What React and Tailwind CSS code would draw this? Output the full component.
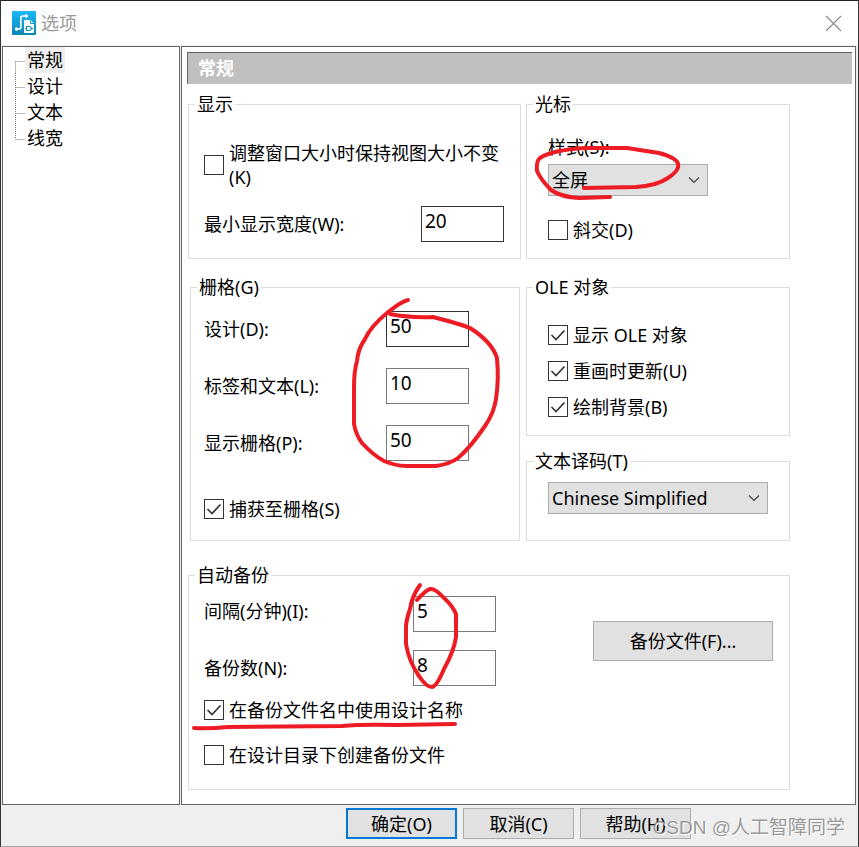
import React from "react";

const TREE_ITEMS = ["常规", "设计", "文本", "线宽"];

function AppIcon() {
  return (
    <svg width="24" height="24" viewBox="0 0 24 24" aria-hidden="true">
      <defs>
        <linearGradient id="iconFill" x1="0" y1="0" x2="0" y2="1">
          <stop offset="0" stopColor="#1cb8f4" />
          <stop offset="1" stopColor="#0a86b4" />
        </linearGradient>
      </defs>
      <rect width="24" height="24" rx="1" fill="url(#iconFill)" />
      <path d="M4.500 18H7q1.800 0 1.800-1.800V6.800Q8.800 5 10.600 5H14" fill="none" stroke="#fff" strokeWidth="1.600" />
      <circle cx="4.500" cy="18" r="1.700" fill="#fff" />
      <circle cx="14.300" cy="5" r="1.700" fill="#fff" />
      <path d="M12 10q0-1 1-1h5.500l3.500 3.500V21q0 1-1 1h-8q-1 0-1-1z" fill="#fff" />
      <path d="M18.500 9.500v3H22" fill="none" stroke="#1595c5" strokeWidth="1" />
      <path d="M14.500 15.500h2.500q2 0 2.500 2-.5 2-2.500 2h-2.500zM13 17.500h1.500M19.500 17.500h1.500" fill="none" stroke="#0d8cbc" strokeWidth="1.100" />
    </svg>
  );
}

function Group({ title, className = "", bodyClass = "", children }) {
  return (
    <fieldset className={"min-w-0 border border-[#dcdcdc] " + className}>
      <legend className="ml-1.5 px-0.5">{title}</legend>
      <div className={bodyClass}>{children}</div>
    </fieldset>
  );
}

function Check({ label, checked = false }) {
  return (
    <label className="flex items-center gap-[5px]">
      <span className="grid size-5 shrink-0">
        <input
          type="checkbox"
          defaultChecked={checked}
          className="peer col-start-1 row-start-1 size-5 appearance-none border border-[#333] bg-white"
        />
        <svg
          viewBox="0 0 20 20"
          className="pointer-events-none invisible col-start-1 row-start-1 size-5 peer-checked:visible"
          aria-hidden="true"
        >
          <path d="M3.500 10l4.500 4.500 8.500-9" fill="none" stroke="#333" strokeWidth="1.700" />
        </svg>
      </span>
      <span>{label}</span>
    </label>
  );
}

function NumberBox({ id, value, tone = "border-[#7a7a7a]" }) {
  return (
    <input
      id={id}
      type="text"
      defaultValue={value}
      className={"h-9 w-[83px] border bg-white px-[3px] pb-1.5 text-[19px] outline-none " + tone}
    />
  );
}

function Select({ id, value, label, className }) {
  return (
    <div className={"grid h-8 max-w-full " + className}>
      <select
        id={id}
        aria-label={label}
        defaultValue={value}
        className="col-start-1 row-start-1 w-full appearance-none border border-[#adadad] bg-[#e1e1e1] pl-[3px] pr-8"
      >
        <option>{value}</option>
      </select>
      <svg
        viewBox="0 0 12 8"
        className="pointer-events-none col-start-1 row-start-1 mr-2 h-2 w-3 self-center justify-self-end"
        aria-hidden="true"
      >
        <path d="M1 1.500l5 5 5-5" fill="none" stroke="#444" strokeWidth="1.200" />
      </svg>
    </div>
  );
}

function GridRow({ id, label, value, tone }) {
  return (
    <div className="flex items-center">
      <label htmlFor={id} className="w-[182px]">{label}</label>
      <NumberBox id={id} value={value} tone={tone} />
    </div>
  );
}

function PenMarks() {
  return (
    <svg
      width="859"
      height="847"
      viewBox="0 0 859 847"
      className="pointer-events-none absolute -left-px -top-px"
      fill="none"
      stroke="#ed1c24"
      strokeWidth="4"
      strokeLinecap="round"
      strokeLinejoin="round"
      aria-hidden="true"
    >
      <path d="M584 188L636 187Q656 186 668 178Q680 170 678 164Q677 158 659 153L627 148L585 148Q552 150 540 158Q536 161 537 171Q541 180 551 190Q561 197 579 198L610 197" />
      <path d="M408 300Q402 301 387 313Q371 326 365 339Q358 349 357 361Q354 371 354 388L354 424Q356 435 362 443Q373 455 384 461Q396 466 406 466L436 466Q450 464 458 458Q470 448 485 426Q494 413 496 399Q499 380 497 358Q492 342 470 328Q460 324 433 317Q410 318 390 314" />
      <path d="M420 585Q412 596 410 609Q406 621 406 627L406 644Q409 662 419 676Q426 687 432 687Q437 686 444 669Q454 651 456 637V614Q452 605 444 598Q435 588 430 589Q426 590 417 600" />
      <path d="M194 728Q208 729 228 727L342 726Q362 724 397 725L455 724" />
    </svg>
  );
}

export default function App() {
  return (
    <div className="relative flex min-h-screen flex-col border border-t-[#222] border-x-[#333] border-b-[#a3a3ab] bg-[#efefef] font-['Noto_Sans','Noto_Sans_CJK_SC',sans-serif] text-[18px] leading-6 text-black">
      <header className="flex h-11 items-center bg-white pl-[11px] pr-4">
        <AppIcon />
        <h1 className="ml-[5px] text-[#999]">选项</h1>
        <button type="button" aria-label="关闭" className="ml-auto">
          <svg width="17" height="17" viewBox="0 0 17 17" aria-hidden="true">
            <path d="M1 1l15 15M16 1L1 16" stroke="#888" strokeWidth="1.100" />
          </svg>
        </button>
      </header>

      <div className="flex flex-1 gap-px pl-px pr-0.5 pt-px">
        <nav className="w-[178px] shrink-0 border border-[#646464] bg-white pl-3" aria-label="分类">
          <ul>
            {TREE_ITEMS.map((item, i) => (
              <li key={item} className="flex h-[26px]">
                <svg width="10" height="26" viewBox="0 0 10 26" className="shrink-0" aria-hidden="true">
                  <path
                    d={i === 0 ? "M.5 14.500V26M.5 14.500H10" : i === TREE_ITEMS.length - 1 ? "M.5 0V14M.5 14.500H10" : "M.5 0V26M.5 14.500H10"}
                    fill="none"
                    stroke="#777"
                    strokeDasharray="1 1"
                  />
                </svg>
                <a
                  href="#general"
                  className={i === 0 ? "bg-[#efefef] px-0.5 leading-[26px]" : "px-0.5 leading-[26px]"}
                >
                  {item}
                </a>
              </li>
            ))}
          </ul>
        </nav>

        <main className="min-w-0 flex-1 border border-[#646464] bg-white pb-3.5 pl-[5px] pt-[5px]">
          <h2 className="mr-[3px] h-8 border-l border-t border-[#646464] bg-[#c0c0c0] pl-2.5 font-bold leading-[30px] text-white">
            常规
          </h2>

          <div className="mr-[65px] ml-px mt-2">
            <div className="grid grid-cols-[333fr_264fr] gap-x-[5px] gap-y-4">
              <Group title="显示" bodyClass="pb-4 pl-[15px] pr-4 pt-[25px]">
                <Check label="调整窗口大小时保持视图大小不变 (K)" />
                <div className="mt-[17px] flex items-center justify-between">
                  <label htmlFor="minWidth">最小显示宽度(W):</label>
                  <NumberBox id="minWidth" value="20" tone="border-[#333]" />
                </div>
              </Group>

              <Group title="光标" bodyClass="px-[21px] pt-[19px]">
                <label htmlFor="cursorStyle">样式(S):</label>
                <div className="mt-[5px]">
                  <Select id="cursorStyle" value="全屏" label="样式" className="w-40" />
                </div>
                <div className="mt-[22px]">
                  <Check label="斜交(D)" />
                </div>
              </Group>

              <Group title="栅格(G)" className="ml-0.5 mr-px" bodyClass="pb-[19px] pl-[13px] pt-3">
                <div className="flex flex-col gap-[21px]">
                  <GridRow id="gridDesign" label="设计(D):" value="50" tone="border-[#333]" />
                  <GridRow id="gridLabel" label="标签和文本(L):" value="10" />
                  <GridRow id="gridShow" label="显示栅格(P):" value="50" />
                </div>
                <div className="mt-9">
                  <Check label="捕获至栅格(S)" checked />
                </div>
              </Group>

              <div className="flex flex-col justify-between">
                <Group title="OLE 对象" bodyClass="flex flex-col gap-3 px-[21px] pb-4 pt-6">
                  <Check label="显示 OLE 对象" checked />
                  <Check label="重画时更新(U)" checked />
                  <Check label="绘制背景(B)" checked />
                </Group>
                <Group title="文本译码(T)" bodyClass="px-[21px] pb-[26px] pt-[9px]">
                  <Select id="encoding" value="Chinese Simplified" label="文本译码" className="w-[220px]" />
                </Group>
              </div>
            </div>

            <Group title="自动备份" className="mt-[22px]" bodyClass="pb-[22px] pl-[15px] pr-4 pt-[9px]">
              <div className="flex justify-between">
                <div>
                  <div className="flex">
                    <div className="flex w-[209px] flex-col gap-[33px] pt-[3px]">
                      <label htmlFor="interval">间隔(分钟)(I):</label>
                      <label htmlFor="copies">备份数(N):</label>
                    </div>
                    <div className="flex flex-col gap-[18px]">
                      <NumberBox id="interval" value="5" />
                      <NumberBox id="copies" value="8" />
                    </div>
                  </div>
                  <div className="mt-3 flex flex-col gap-[21px]">
                    <Check label="在备份文件名中使用设计名称" checked />
                    <Check label="在设计目录下创建备份文件" />
                  </div>
                </div>
                <button type="button" className="mt-[25px] h-10 w-[180px] shrink-0 border border-[#adadad] bg-[#e1e1e1]">
                  备份文件(F)...
                </button>
              </div>
            </Group>
          </div>
        </main>
      </div>

      <footer className="flex justify-end gap-1.5 pb-[7px] pr-[167px] pt-[3px]">
        <button type="button" className="h-[31px] w-[111px] border-2 border-[#0078d7] bg-[#e1e1e1]">确定(O)</button>
        <button type="button" className="h-[31px] w-[111px] border border-[#adadad] bg-[#e1e1e1]">取消(C)</button>
        <button type="button" className="h-[31px] w-[111px] border border-[#adadad] bg-[#e1e1e1]">帮助(H)</button>
      </footer>

      <PenMarks />
      <p className="pointer-events-none absolute bottom-1.5 right-[13px] whitespace-nowrap font-['Liberation_Sans','Noto_Sans_CJK_SC',sans-serif] text-[19px] text-[#808080]/80 [text-shadow:1px_1px_0_#fff]">
        CSDN @人工智障同学
      </p>
    </div>
  );
}
